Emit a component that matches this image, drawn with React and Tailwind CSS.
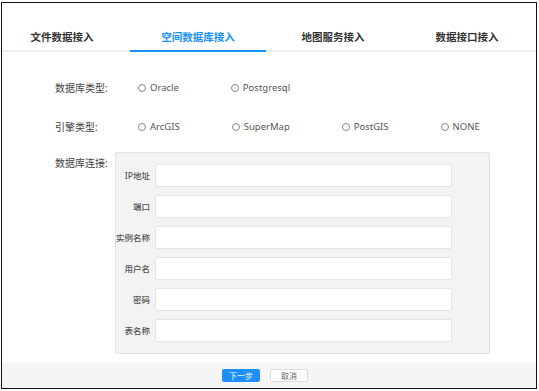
import React from 'react';

const tabs = [
  { label: '文件数据接入', w: 'w-[128px] pr-2' },
  { label: '空间数据库接入', w: 'w-[136px]', active: true },
  { label: '地图服务接入', w: 'w-[134px]' },
  { label: '数据接口接入', w: 'w-[134px]' },
];

const fields = ['IP地址', '端口', '实例名称', '用户名', '密码', '表名称'];

const Radio = ({ label }) => (
  <label className="flex items-center gap-[4px] text-[9.5px] leading-[14px] text-[#555]">
    <span className="w-[8px] h-[8px] rounded-full border border-[#888] bg-white" />
    <span>{label}</span>
  </label>
);

const App = () => {
  return (
    <div
      className="w-[539px] h-[391px] bg-white pt-[2px] pl-[1px]"
      style={{ fontFamily: '"Noto Sans", "Noto Sans CJK SC", sans-serif' }}
    >
      <div className="w-[536px] h-[387px] border border-[#111] flex flex-col">
        {/* tabs */}
        <div className="flex border-b-2 border-[#eeeeee]">
          {tabs.map((t) => (
            <div
              key={t.label}
              className={`${t.w} pt-[27px] pb-[6px] -mb-[2px] text-center text-[10.5px] leading-[14px] font-bold border-b-2 ${
                t.active ? 'text-[#1890ff] border-[#1890ff]' : 'text-[#333] border-transparent'
              }`}
            >
              {t.label}
            </div>
          ))}
        </div>

        {/* body */}
        <div className="pl-[53px] pt-[29px]">
          <div className="flex items-center h-[14px]">
            <span className="w-[83px] text-[10px] leading-[14px] text-[#444]">数据库类型:</span>
            <div className="flex gap-[52px]">
              <Radio label="Oracle" />
              <Radio label="Postgresql" />
            </div>
          </div>
          <div className="flex items-center h-[14px] mt-[25px]">
            <span className="w-[83px] text-[10px] leading-[14px] text-[#444]">引擎类型:</span>
            <div className="flex gap-[52px]">
              <Radio label="ArcGIS" />
              <Radio label="SuperMap" />
              <Radio label="PostGIS" />
              <Radio label="NONE" />
            </div>
          </div>
          <div className="flex mt-[18px]">
            <span className="w-[60px] pt-[4px] text-[10px] leading-[14px] text-[#444]">数据库连接:</span>
            <div className="w-[375px] bg-[#f3f3f3] border border-[#e2e2e2] rounded-[2px] pt-[11px] pb-[11px] flex flex-col gap-[8px]">
              {fields.map((f) => (
                <div key={f} className="flex items-center">
                  <span className="w-[34px] text-right text-[8.5px] leading-[12px] text-[#555] font-medium">
                    {f}
                  </span>
                  <div className="ml-[5px] w-[297px] h-[23px] bg-white border border-[#e4e4e4] rounded-[2px]" />
                </div>
              ))}
            </div>
          </div>
        </div>

        {/* footer */}
        <div className="mt-auto h-[25px] bg-[#f5f5f5] flex items-center justify-center gap-[10px] pr-[8px]">
          <button className="w-[38px] h-[13px] bg-[#1e8fff] rounded-[2px] text-white text-[8px] leading-[13px]">
            下一步
          </button>
          <button className="w-[38px] h-[13px] bg-white border border-[#ddd] rounded-[2px] text-[#666] text-[8px] leading-[11px]">
            取消
          </button>
        </div>
      </div>
    </div>
  );
};

export default App;
